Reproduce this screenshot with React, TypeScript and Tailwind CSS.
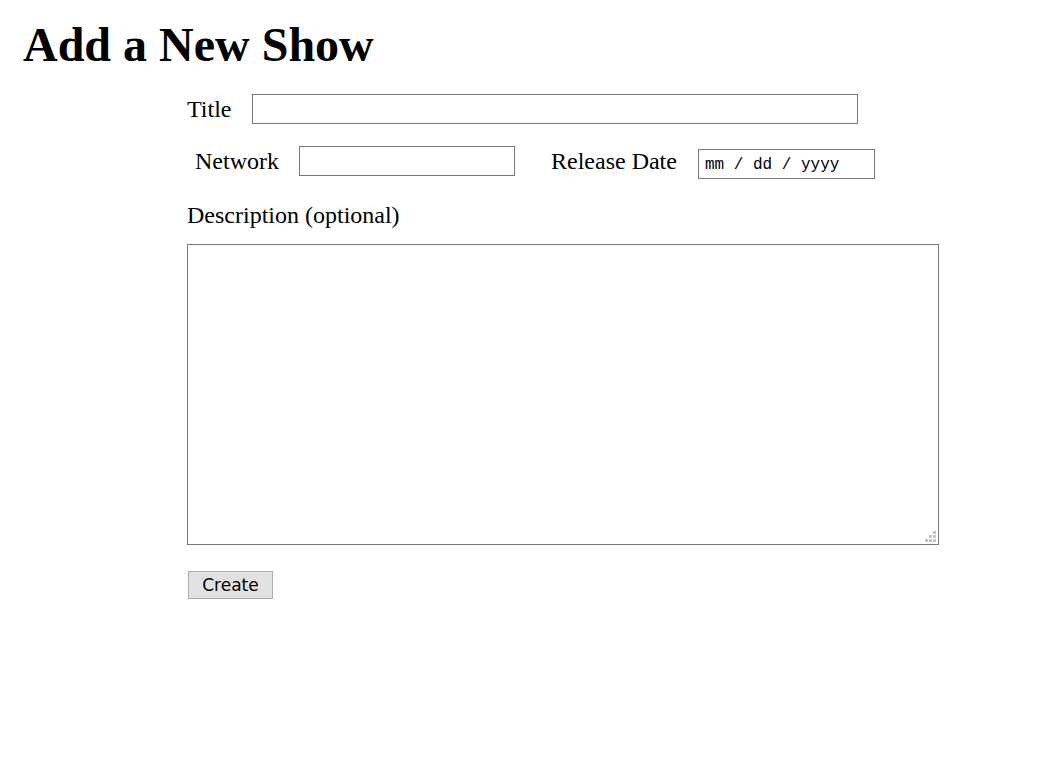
import React from "react";

const serif = { fontFamily: '"Liberation Serif", "Times New Roman", serif' };

export default function App() {
  return (
    <div className="min-h-[776px] bg-white text-black" style={serif}>
      <h1 className="pt-[17px] pl-[23px] text-[48px] font-bold leading-[56px] font-['Liberation_Serif',serif]">
        Add a New Show
      </h1>
      <form className="mt-[21px] pl-[187px] flex flex-col text-[24px] leading-[30px] font-['Liberation_Serif',serif]">
        <div className="flex items-start h-[30px]">
          <label className="w-[65px]">Title</label>
          <input
            type="text"
            className="w-[606px] h-[30px] border border-[#767676] bg-white outline-none"
          />
        </div>
        <div className="mt-[22px] flex items-start h-[33px]">
          <label className="ml-[8px] w-[104px]">Network</label>
          <input
            type="text"
            className="w-[216px] h-[30px] border border-[#767676] bg-white outline-none"
          />
          <label className="ml-[36px] w-[147px]">Release Date</label>
          <div className="mt-[3px] w-[177px] h-[30px] border border-[#767676] bg-white flex items-center pl-[6px] text-[16px] leading-[20px] font-['Liberation_Mono','Courier_New',monospace] whitespace-pre">
            <span className="pt-[1px]">mm / dd / yyyy</span>
          </div>
        </div>
        <label className="mt-[21px] h-[30px]">Description (optional)</label>
        <div className="relative mt-[14px] w-[752px] h-[301px]">
          <textarea className="block w-[752px] h-[301px] border border-[#767676] bg-white outline-none resize-none" />
          <svg
            className="absolute right-[3px] bottom-[3px]"
            width="12"
            height="12"
            viewBox="0 0 12 12"
          >
            <rect x="1" y="9" width="3" height="3" fill="#c4c4c4" />
            <rect x="5" y="9" width="3" height="3" fill="#c4c4c4" />
            <rect x="9" y="9" width="3" height="3" fill="#c4c4c4" />
            <rect x="5" y="5" width="3" height="3" fill="#c4c4c4" />
            <rect x="9" y="5" width="3" height="3" fill="#c4c4c4" />
            <rect x="9" y="1" width="3" height="3" fill="#c4c4c4" />
          </svg>
        </div>
        <div className="mt-[23px] pl-[1px]">
          <button
            type="button"
            className="w-[85px] h-[28px] border border-[#adadad] bg-[#e1e1e1] text-[17px] leading-[20px] text-black font-['DejaVu_Sans',sans-serif]"
          >
            Create
          </button>
        </div>
      </form>
    </div>
  );
}
